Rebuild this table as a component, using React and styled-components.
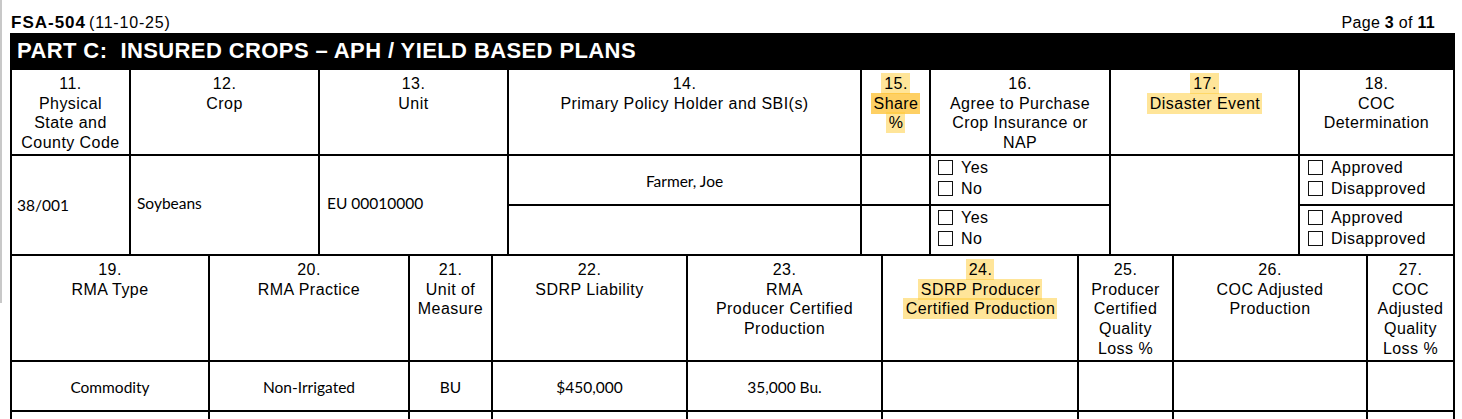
import React from 'react';
import styled, { createGlobalStyle } from 'styled-components';

const GlobalStyle = createGlobalStyle`
    body {
        margin: 0;
        background: #fff;
        color: #000;
        font-family: "Liberation Sans", Arial, sans-serif;
    }
`;

const topCols = '117px 187px 187px 351px 67px 178px 187px 153px';
const bottomCols = '196px 198px 81px 193px 193px 194px 93px 192px 85px';

const partOneHeads = [
    { n: '11.', lines: ['Physical', 'State and', 'County Code'] },
    { n: '12.', lines: ['Crop'] },
    { n: '13.', lines: ['Unit'] },
    { n: '14.', lines: ['Primary Policy Holder and SBI(s)'] },
    { n: '15.', mark: 'light', lines: [{ t: 'Share', mark: 'strong' }, { t: '%', mark: 'light' }] },
    { n: '16.', lines: ['Agree to Purchase', 'Crop Insurance or', 'NAP'] },
    { n: '17.', mark: 'light', lines: [{ t: 'Disaster Event', mark: 'light' }] },
    { n: '18.', lines: ['COC', 'Determination'] },
];

const partTwoHeads = [
    { n: '19.', lines: ['RMA Type'] },
    { n: '20.', lines: ['RMA Practice'] },
    { n: '21.', lines: ['Unit of', 'Measure'] },
    { n: '22.', lines: ['SDRP Liability'] },
    { n: '23.', lines: ['RMA', 'Producer Certified', 'Production'] },
    { n: '24.', mark: 'light', lines: [{ t: 'SDRP Producer', mark: 'light' }, { t: 'Certified Production', mark: 'light' }] },
    { n: '25.', lines: ['Producer', 'Certified', 'Quality', 'Loss %'] },
    { n: '26.', lines: ['COC Adjusted', 'Production'] },
    { n: '27.', lines: ['COC', 'Adjusted', 'Quality', 'Loss %'] },
];

const partTwoRow = ['Commodity', 'Non-Irrigated', 'BU', '$450,000', '35,000 Bu.', '', '', '', ''];

const HeadText = ({ head }) => (
    <HeadCell>
        <Line>{head.mark ? <Mark $tone={head.mark}>{head.n}</Mark> : head.n}</Line>
        {head.lines.map((l, i) => {
            const item = typeof l === 'string' ? { t: l } : l;
            return (
                <Line key={i}>
                    {item.mark ? <Mark $tone={item.mark}>{item.t}</Mark> : item.t}
                </Line>
            );
        })}
    </HeadCell>
);

const Choices = ({ options, inset }) => (
    <ChoiceCell $inset={inset}>
        {options.map((o) => (
            <Choice key={o}>
                <Box />
                <span>{o}</span>
            </Choice>
        ))}
    </ChoiceCell>
);

const App = () => {
    return (
        <>
            <GlobalStyle />
            <PageEdge />
            <Sheet>
                <TopLine>
                    <FormId>
                        FSA-504<Revision>(11-10-25)</Revision>
                    </FormId>
                    <PageInfo>
                        Page <b>3</b> of <b>11</b>
                    </PageInfo>
                </TopLine>
                <TitleBar>{'PART C:  INSURED CROPS \u2013 APH / YIELD BASED PLANS'}</TitleBar>

                <PartTable $cols={topCols} $rows="84px 48px 48px">
                    {partOneHeads.map((h) => (
                        <HeadText key={h.n} head={h} />
                    ))}
                    <DataCell $span $pad="5px">38/001</DataCell>
                    <DataCell $span $pad="6px" $lift="5px">Soybeans</DataCell>
                    <DataCell $span $pad="7px" $lift="5px">EU 00010000</DataCell>
                    <DataCell $align="center" $drop="2px">Farmer, Joe</DataCell>
                    <DataCell />
                    <Choices options={['Yes', 'No']} inset="7px" />
                    <DataCell $span />
                    <Choices options={['Approved', 'Disapproved']} inset="8px" />
                    <DataCell />
                    <DataCell />
                    <Choices options={['Yes', 'No']} inset="7px" />
                    <Choices options={['Approved', 'Disapproved']} inset="8px" />
                </PartTable>

                <PartTable $cols={bottomCols} $rows="104px 48px 30px">
                    {partTwoHeads.map((h) => (
                        <HeadText key={h.n} head={h} />
                    ))}
                    {partTwoRow.map((v, i) => (
                        <DataCell key={'v' + i} $align="center" $drop="2px">{v}</DataCell>
                    ))}
                    {partTwoRow.map((v, i) => (
                        <DataCell key={'e' + i} />
                    ))}
                </PartTable>
            </Sheet>
        </>
    );
};

const PageEdge = styled.div`
    position: fixed;
    left: 0;
    top: 0;
    width: 2px;
    height: 303px;
    background: #c8c8c8;
`;

const Sheet = styled.div`
    width: 1445px;
    margin-left: 10px;
`;

const TopLine = styled.div`
    box-sizing: border-box;
    height: 33px;
    padding: 14px 20px 0 1px;
    display: flex;
    justify-content: space-between;
    align-items: baseline;
    line-height: 18px;
`;

const FormId = styled.div`
    font-size: 17px;
    font-weight: bold;
    letter-spacing: 1px;
`;

const Revision = styled.span`
    margin-left: 3px;
    font-size: 16px;
    font-weight: normal;
    letter-spacing: 0.8px;
`;

const PageInfo = styled.div`
    font-size: 16px;
    letter-spacing: 0.3px;
`;

const TitleBar = styled.div`
    height: 37px;
    box-sizing: border-box;
    padding-left: 7px;
    background: #000;
    color: #fff;
    font-size: 22px;
    font-weight: bold;
    line-height: 35px;
    letter-spacing: 0.4px;
    white-space: pre;
`;

const PartTable = styled.div`
    display: grid;
    grid-template-columns: ${(p) => p.$cols};
    grid-template-rows: ${(p) => p.$rows};
    gap: 2px;
    padding: 0 2px 2px;
    background: #000;
`;

const HeadCell = styled.div`
    background: #fff;
    padding-top: 4px;
    text-align: center;
    font-size: 16px;
    line-height: 19.7px;
    letter-spacing: 0.45px;
`;

const Line = styled.div`
    white-space: nowrap;
`;

const Mark = styled.span`
    padding: 2px 2px 2px 3px;
    background: ${(p) => (p.$tone === 'strong' ? 'rgba(253, 190, 40, 0.72)' : 'rgba(255, 204, 51, 0.5)')};
`;

const DataCell = styled.div`
    grid-row: ${(p) => (p.$span ? 'span 2' : 'auto')};
    background: #fff;
    display: flex;
    align-items: center;
    justify-content: ${(p) => (p.$align === 'center' ? 'center' : 'flex-start')};
    padding: ${(p) => p.$drop || '0'} 0 ${(p) => p.$lift || '0'} ${(p) => p.$pad || '0'};
    font-family: Lato, "Noto Sans", sans-serif;
    font-size: 15.5px;
    white-space: nowrap;
`;

const ChoiceCell = styled.div`
    background: #fff;
    display: flex;
    flex-direction: column;
    padding: 1px 0 0 ${(p) => p.$inset};
`;

const Choice = styled.div`
    display: flex;
    align-items: center;
    gap: 8px;
    height: 21px;
    font-size: 16px;
    letter-spacing: 0.45px;
`;

const Box = styled.span`
    box-sizing: border-box;
    width: 15px;
    height: 15px;
    border: 1px solid #111;
`;

export default App;
